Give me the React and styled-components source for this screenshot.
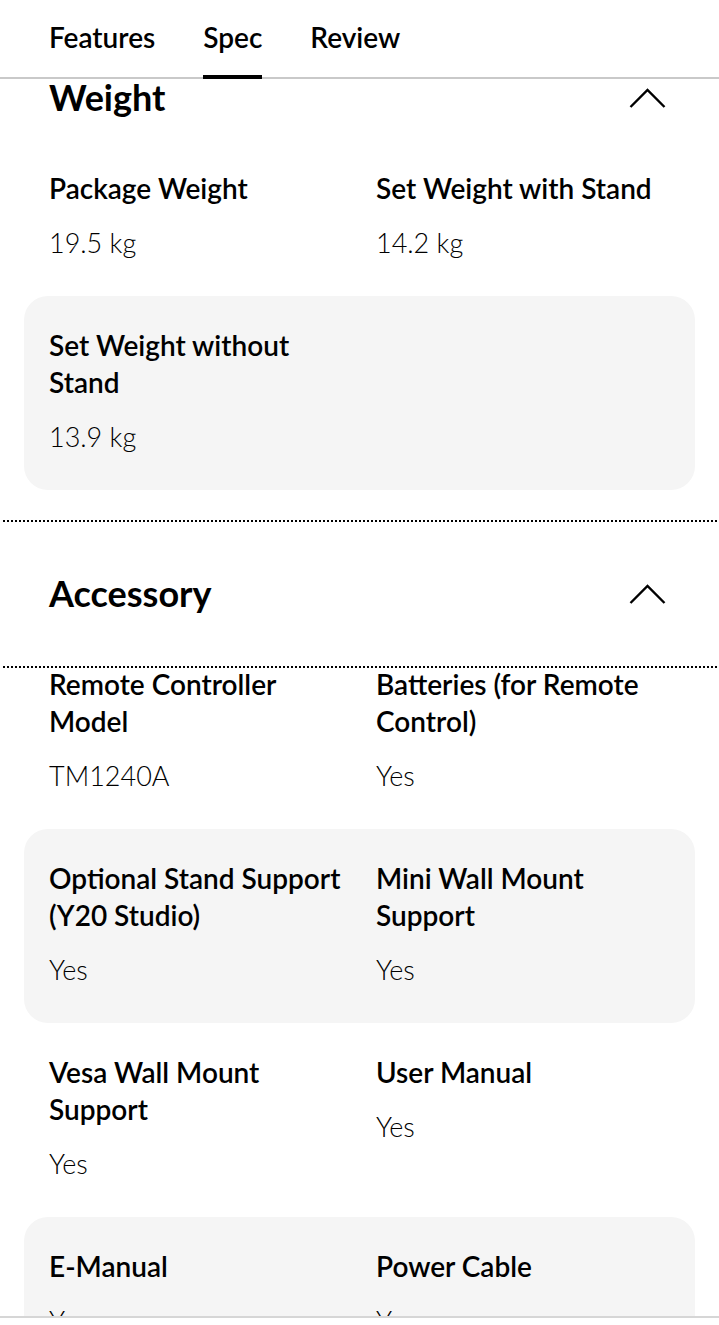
import React from "react";
import styled, { createGlobalStyle } from "styled-components";

const GlobalStyle = createGlobalStyle`
  html, body { margin: 0; padding: 0; background: #fff; }
  body { font-family: Lato, "Noto Sans", sans-serif; color: #000; overflow-x: hidden; }
  * { box-sizing: border-box; }
`;

const Page = styled.div`
  width: 719px;
`;

const TabBar = styled.nav`
  position: sticky;
  top: 0;
  z-index: 2;
  display: flex;
  gap: 48px;
  height: 79px;
  padding: 0 49px;
  background: #fff;
  box-shadow: inset 0 -2px 0 #c9c9c9;
`;

const Tab = styled.div`
  position: relative;
  padding-top: 21px;
  font-size: 28px;
  line-height: 1.2;
  font-weight: 600;
  color: #000;
  &::after {
    content: "";
    display: ${(p) => (p.$active ? "block" : "none")};
    position: absolute;
    left: 0;
    right: 0;
    bottom: 0;
    height: 4px;
    background: #000;
  }
`;

const Body = styled.main`
  margin-top: -53px;
`;

const Section = styled.section`
  display: flex;
  flex-direction: column;
`;

const Header = styled.button`
  display: flex;
  align-items: center;
  justify-content: space-between;
  width: 100%;
  height: 144px;
  padding: 0 53px 0 49px;
  border: 0;
  background: transparent;
  font: inherit;
  color: inherit;
  text-align: left;
  outline: ${(p) => (p.$focused ? "2px dotted #000" : "none")};
  outline-offset: 0;
`;

const Heading = styled.h2`
  margin: 0;
  font-size: 36px;
  font-weight: 700;
  line-height: 1.2;
`;

const Rows = styled.div`
  display: flex;
  flex-direction: column;
  padding: 0 24px 32px;
`;

const Row = styled.div`
  display: grid;
  grid-template-columns: 1fr 1fr;
  column-gap: 33px;
  padding: 31px 25px 35px;
  border-radius: 24px;
  background: ${(p) => (p.$shade ? "#f5f5f5" : "transparent")};
  &:first-child {
    padding-top: 0;
  }
`;

const Cell = styled.div`
  display: flex;
  flex-direction: column;
  gap: 17px;
`;

const Label = styled.div`
  font-size: 28px;
  font-weight: 600;
  line-height: 37px;
`;

const Value = styled.div`
  font-size: 27px;
  font-weight: 300;
  line-height: 37px;
`;

const Footer = styled.div`
  position: fixed;
  left: 0;
  right: 0;
  bottom: 0;
  height: 9px;
  background: #fff;
  border-top: 2px solid #d6d6d6;
  z-index: 2;
`;

const Chevron = () => (
  <svg width="37" height="22" viewBox="0 0 37 22" aria-hidden="true">
    <polyline points="1.5,20 18.5,3 35.5,20" fill="none" stroke="#000" strokeWidth="2.4" />
  </svg>
);

const sections = [
  {
    title: "Weight",
    rows: [
      [["Package Weight", "19.5 kg"], ["Set Weight with Stand", "14.2 kg"]],
      [["Set Weight without Stand", "13.9 kg"]],
    ],
  },
  {
    title: "Accessory",
    focused: true,
    rows: [
      [["Remote Controller Model", "TM1240A"], ["Batteries (for Remote Control)", "Yes"]],
      [["Optional Stand Support (Y20 Studio)", "Yes"], ["Mini Wall Mount Support", "Yes"]],
      [["Vesa Wall Mount Support", "Yes"], ["User Manual", "Yes"]],
      [["E-Manual", "Yes"], ["Power Cable", "Yes"]],
    ],
  },
];

export default function App() {
  return (
    <Page>
      <GlobalStyle />
      <TabBar>
        <Tab>Features</Tab>
        <Tab $active>Spec</Tab>
        <Tab>Review</Tab>
      </TabBar>
      <Body>
        {sections.map((s) => (
          <Section key={s.title}>
            <Header $focused={s.focused}>
              <Heading>{s.title}</Heading>
              <Chevron />
            </Header>
            <Rows>
              {s.rows.map((r, i) => (
                <Row key={i} $shade={i % 2 === 1}>
                  {r.map(([label, value]) => (
                    <Cell key={label}>
                      <Label>{label}</Label>
                      <Value>{value}</Value>
                    </Cell>
                  ))}
                </Row>
              ))}
            </Rows>
          </Section>
        ))}
      </Body>
      <Footer />
    </Page>
  );
}
